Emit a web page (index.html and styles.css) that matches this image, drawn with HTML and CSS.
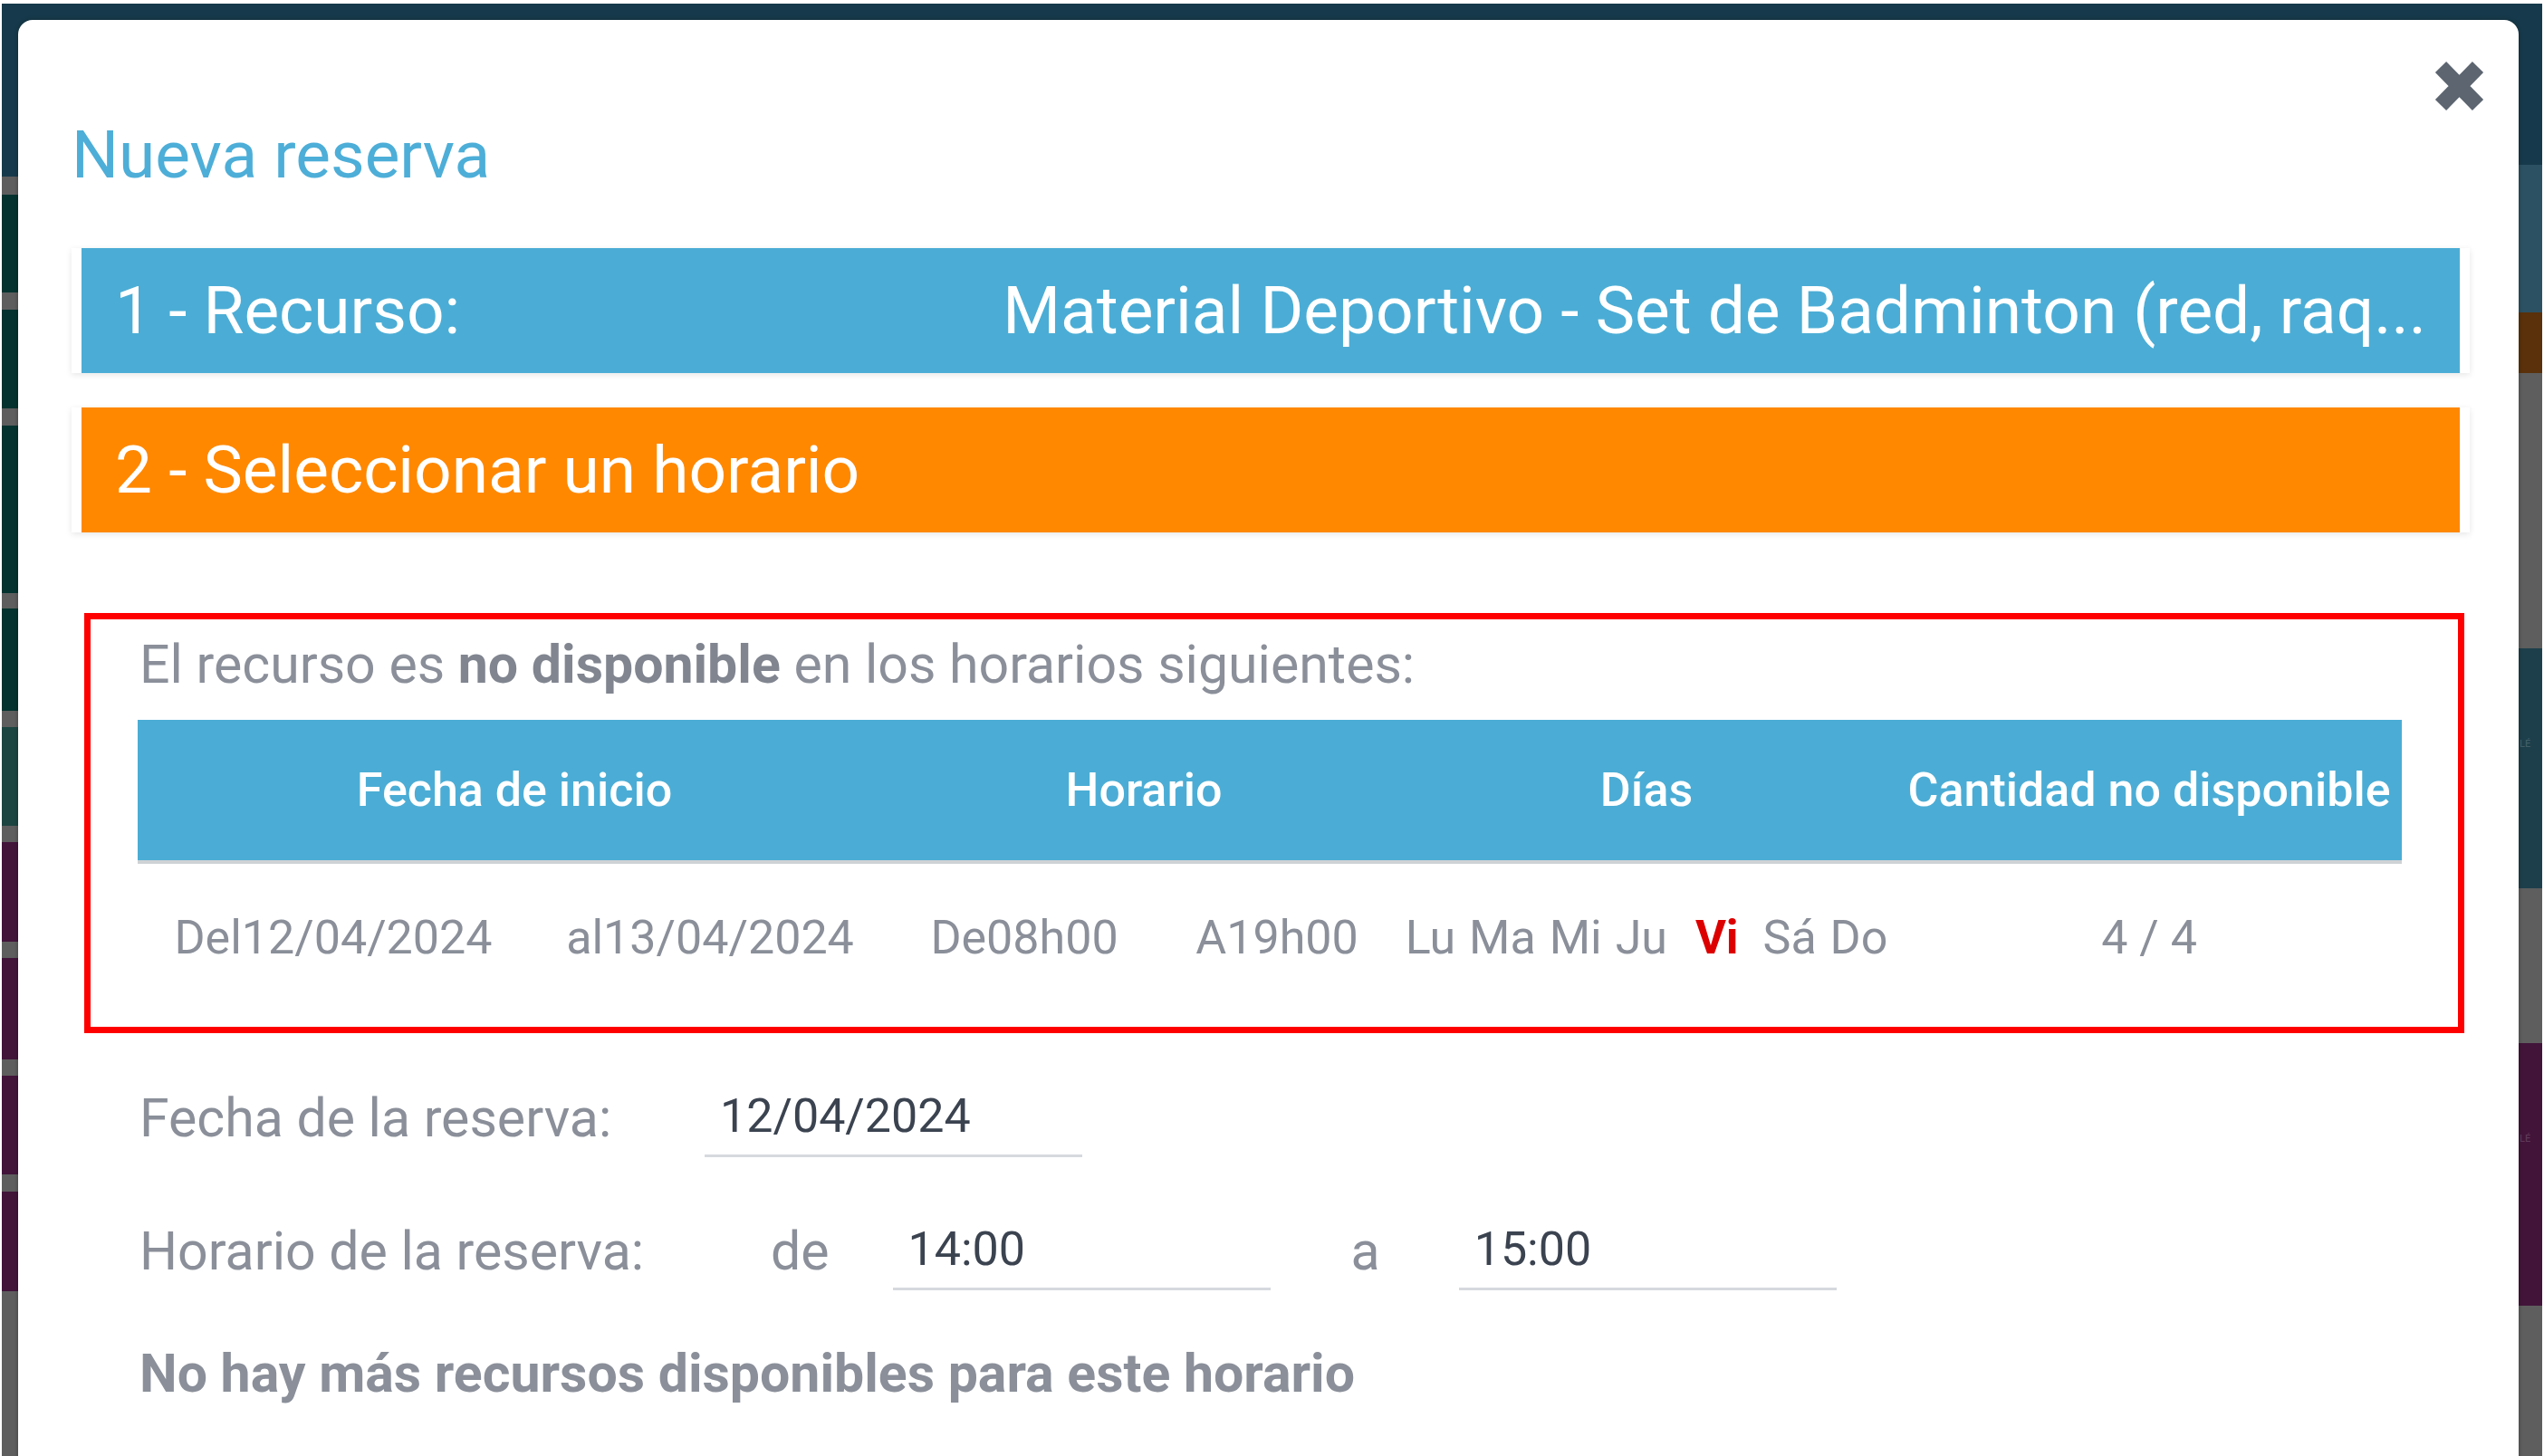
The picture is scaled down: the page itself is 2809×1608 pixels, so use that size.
FILE: index.html
```html
<!DOCTYPE html>
<html lang="es">
<head>
<meta charset="utf-8">
<title>Nueva reserva</title>
<link rel="stylesheet" href="styles.css">
</head>
<body>
<div class="screen">
  <div class="strip strip-left">
    <div class="s s-blue h191"></div>
    <div class="s s-gray h20"></div>
    <div class="s s-green h108"></div>
    <div class="s s-gray h19"></div>
    <div class="s s-green h109"></div>
    <div class="s s-gray h19"></div>
    <div class="s s-green h185"></div>
    <div class="s s-gray h17"></div>
    <div class="s s-green h113"></div>
    <div class="s s-gray h18"></div>
    <div class="s s-teal h109"></div>
    <div class="s s-gray h18"></div>
    <div class="s s-purple h110"></div>
    <div class="s s-gray h18"></div>
    <div class="s s-purple h112"></div>
    <div class="s s-gray h18"></div>
    <div class="s s-purple h109"></div>
    <div class="s s-gray h19"></div>
    <div class="s s-purple h110"></div>
    <div class="s s-gray fill"></div>
  </div>
  <div class="strip strip-right">
    <div class="s s-blue h178"></div>
    <div class="s s-slate h163"></div>
    <div class="s s-brown h67"></div>
    <div class="s s-gray h304"></div>
    <div class="s s-navy h265"><span class="ghost">LÉ</span></div>
    <div class="s s-gray h171"></div>
    <div class="s s-purple h290"><span class="ghost">LÉ</span></div>
    <div class="s s-gray fill"></div>
  </div>

  <div class="modal">
    <button class="close" type="button" aria-label="Cerrar">
      <svg viewBox="0 0 59 58" width="59" height="58" aria-hidden="true">
        <path d="M9 8 L50 50 M50 8 L9 50" stroke="#5c6570" stroke-width="17" stroke-linecap="butt" fill="none"/>
      </svg>
    </button>

    <h1 class="title">Nueva reserva</h1>

    <div class="panel">
      <div class="panel-head head-blue">
        <span>1 - Recurso:</span>
        <span class="resource">Material Deportivo - Set de Badminton (red, raq...</span>
      </div>
    </div>

    <div class="panel panel-second">
      <div class="panel-head head-orange">
        <span>2 - Seleccionar un horario</span>
      </div>
    </div>

    <div class="unavailable">
      <p class="notice">El recurso es <strong>no disponible</strong> en los horarios siguientes:</p>
      <table class="slots">
        <colgroup>
          <col class="c1"><col class="c2"><col class="c3"><col class="c4"><col class="c5"><col class="c6">
        </colgroup>
        <thead>
          <tr>
            <th colspan="2">Fecha de inicio</th>
            <th colspan="2">Horario</th>
            <th>Días</th>
            <th>Cantidad no disponible</th>
          </tr>
        </thead>
        <tbody>
          <tr>
            <td>Del12/04/2024</td>
            <td>al13/04/2024</td>
            <td>De08h00</td>
            <td>A19h00</td>
            <td class="days">Lu Ma Mi Ju <b class="today">Vi</b> Sá Do</td>
            <td>4 / 4</td>
          </tr>
        </tbody>
      </table>
    </div>

    <div class="form">
      <div class="form-row first">
        <span class="label">Fecha de la reserva:</span>
        <div class="field field-date">12/04/2024</div>
      </div>
      <div class="form-row second">
        <span class="label">Horario de la reserva:</span>
        <span class="conj conj-de">de</span>
        <div class="field field-time">14:00</div>
        <span class="conj conj-a">a</span>
        <div class="field field-time">15:00</div>
      </div>
      <p class="warning">No hay más recursos disponibles para este horario</p>
    </div>
  </div>
</div>
</body>
</html>
```

FILE: styles.css
```css
* { box-sizing: border-box; }

html, body {
  margin: 0;
  padding: 0;
  background: #ffffff;
}

body {
  width: 2809px;
  height: 1608px;
  overflow: hidden;
  font-family: Roboto, "Liberation Sans", Arial, sans-serif;
}

.screen {
  position: relative;
  margin: 4px 2px 0;
  height: 1604px;
  background: #163a4b;
  display: flex;
  justify-content: space-between;
  overflow: hidden;
}

.strip {
  display: flex;
  flex-direction: column;
  height: 100%;
}
.strip-left { width: 22px; }
.strip-right { width: 30px; }

.s { flex: none; position: relative; overflow: hidden; }
.fill { flex: 1; }
.s-blue { background: #163a4b; }
.s-gray { background: #5e5e5e; }
.s-green { background: #04332f; }
.s-teal { background: #1c4541; }
.s-purple { background: #42143a; }
.s-slate { background: #2c5163; }
.s-brown { background: #5a310a; }
.s-navy { background: #1d3f4c; }

.ghost {
  position: absolute;
  left: 5px;
  top: 100px;
  font-size: 11px;
  line-height: 1;
  color: rgba(255, 255, 255, 0.16);
  font-weight: 500;
}

.h17 { height: 17px; } .h18 { height: 18px; } .h19 { height: 19px; } .h20 { height: 20px; }
.h67 { height: 67px; } .h108 { height: 108px; } .h109 { height: 109px; } .h110 { height: 110px; }
.h112 { height: 112px; } .h113 { height: 113px; } .h163 { height: 163px; } .h171 { height: 171px; }
.h178 { height: 178px; } .h185 { height: 185px; } .h191 { height: 191px; } .h265 { height: 265px; }
.h290 { height: 290px; } .h304 { height: 304px; }

/* modal overlay */
.modal {
  position: absolute;
  left: 18px;
  top: 18px;
  width: 2761px;
  bottom: -40px;
  background: #ffffff;
  border-radius: 16px 16px 0 0;
  box-shadow: 0 0 4px rgba(0, 0, 0, 0.35);
  padding: 0 54px 0 59px;
}

.close {
  position: absolute;
  top: 44px;
  right: 36px;
  width: 59px;
  height: 58px;
  padding: 0;
  border: 0;
  background: transparent;
}
.close svg { display: block; }

.title {
  margin: 0;
  padding-top: 106px;
  font-size: 73px;
  line-height: 86px;
  font-weight: 400;
  color: #4daed8;
}

.panel {
  margin-top: 60px;
  padding: 0 11px;
  background: #ffffff;
  box-shadow: 0 2px 7px rgba(0, 0, 0, 0.1);
}
.panel-second { margin-top: 38px; }

.panel-head {
  height: 138px;
  padding: 0 37px;
  display: flex;
  align-items: center;
  justify-content: space-between;
  color: #ffffff;
  font-size: 73px;
  line-height: 1;
  white-space: nowrap;
}
.head-blue { background: #4badd5; }
.head-orange { background: #ff8800; }

.unavailable {
  margin: 89px 6px 0 14px;
  border: 7px solid #ff0000;
  padding: 16px 62px 18px 52px;
}

.notice {
  margin: 0 0 27px 2px;
  font-size: 59px;
  line-height: 68px;
  color: #8a8f99;
}
.notice strong { font-weight: 700; color: #80858f; }

.slots {
  width: 100%;
  border-collapse: collapse;
  table-layout: fixed;
}
.c1 { width: 432px; } .c2 { width: 400px; } .c3 { width: 294px; }
.c4 { width: 264px; } .c5 { width: 552px; } .c6 { width: 558px; }

.slots th {
  height: 157px;
  padding: 0;
  background: #4badd5;
  border-bottom: 4px solid #cfd2d5;
  color: #ffffff;
  font-size: 52px;
  font-weight: 500;
  text-align: center;
  white-space: nowrap;
}

.slots td {
  height: 164px;
  padding: 0;
  text-align: center;
  vertical-align: middle;
  font-size: 52px;
  color: #8a8f99;
  white-space: nowrap;
}

.days { word-spacing: 2px; }

.today {
  color: #dd0000;
  font-weight: 700;
  margin: 0 12px 0 16px;
}

.form { margin-left: 75px; }

.form-row {
  display: flex;
  align-items: center;
}
.form-row.first { margin-top: 50px; }
.form-row.second { margin-top: 60px; }

.label {
  width: 624px;
  flex: none;
  font-size: 59px;
  line-height: 60px;
  color: #8a8f99;
}

.field {
  flex: none;
  padding: 12px 17px;
  font-size: 52px;
  line-height: 60px;
  color: #3b4350;
  border-bottom: 3px solid #d6d9de;
}
.field-date { width: 417px; }
.field-time { width: 417px; }

.conj {
  flex: none;
  font-size: 59px;
  line-height: 60px;
  color: #8a8f99;
}
.conj-de { margin-left: 73px; margin-right: 70px; }
.conj-a { margin-left: 89px; margin-right: 87px; }

.warning {
  margin: 58px 0 0;
  font-size: 59px;
  line-height: 68px;
  font-weight: 700;
  color: #8a8f99;
}
```
